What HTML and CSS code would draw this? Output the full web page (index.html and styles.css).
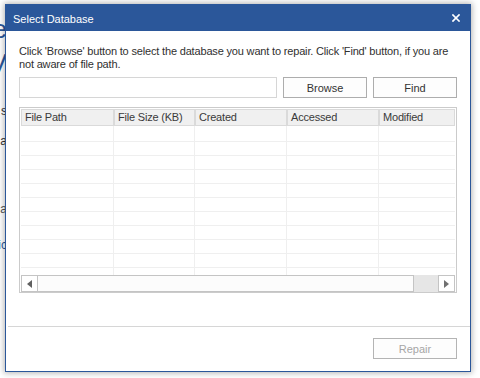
FILE: index.html
```html
<!DOCTYPE html>
<html>
<head>
<meta charset="utf-8">
<link rel="stylesheet" href="styles.css">
</head>
<body>
<div class="app">
  <div class="frag frag-e">e</div>
  <div class="frag frag-v">V</div>
  <div class="frag frag-s">s</div>
  <div class="frag frag-a">a</div>
  <div class="frag frag-ca">ca</div>
  <div class="frag frag-ic">ic</div>
</div>
<div class="dialog">
  <div class="titlebar">
    <span class="title">Select Database</span>
    <svg class="close" width="8" height="8" viewBox="0 0 8 8"><path d="M1 1L7 7M7 1L1 7" stroke="#fff" stroke-width="1.7" stroke-linecap="square"/></svg>
  </div>
  <div class="content">
    <p class="intro">Click 'Browse' button to select the database you want to repair. Click 'Find' button, if you are<br>not aware of file path.</p>
    <div class="pick-row">
      <input class="path" type="text">
      <button class="btn">Browse</button>
      <button class="btn">Find</button>
    </div>
    <div class="list">
      <div class="head">
        <div class="hcell c1">File Path</div>
        <div class="hcell c2">File Size (KB)</div>
        <div class="hcell c3">Created</div>
        <div class="hcell c4">Accessed</div>
        <div class="hcell c5">Modified</div>
      </div>
      <div class="rows">
        <div class="col c1"></div>
        <div class="col c2"></div>
        <div class="col c3"></div>
        <div class="col c4"></div>
        <div class="col c5 last"></div>
      </div>
      <div class="scroll">
        <div class="sbtn"><svg width="5" height="8" viewBox="0 0 5 8"><polygon points="5,0 5,8 0,4" fill="#606060"/></svg></div>
        <div class="thumb"></div>
        <div class="track"></div>
        <div class="sbtn"><svg width="5" height="8" viewBox="0 0 5 8"><polygon points="0,0 0,8 5,4" fill="#707070"/></svg></div>
      </div>
    </div>
  </div>
  <div class="sep"></div>
  <div class="footer">
    <button class="btn" disabled>Repair</button>
  </div>
</div>
</body>
</html>
```
FILE: styles.css
```css
body {
  margin: 0;
  width: 480px;
  height: 378px;
  background: #fff;
  position: relative;
  overflow: hidden;
  font-family: "Liberation Sans", Arial, sans-serif;
  font-size: 11px;
  color: #333;
}

.app {
  position: absolute;
  left: 0;
  top: 0;
  width: 6px;
  height: 378px;
  overflow: hidden;
  display: flex;
  flex-direction: column;
}

.frag {
  width: 40px;
  margin-left: -33px;
  text-align: right;
  white-space: nowrap;
}

.frag-e {
  margin-top: 14px;
  font-size: 26px;
  line-height: 30px;
  color: #2b579a;
}

.frag-v {
  margin-top: 4px;
  font-size: 26px;
  line-height: 30px;
  color: #2b579a;
}

.frag-s {
  margin-top: 26px;
  font-size: 12px;
  line-height: 14px;
  color: #333;
}

.frag-a {
  margin-top: 16px;
  font-size: 12px;
  line-height: 14px;
  color: #333;
}

.frag-ca {
  margin-top: 54px;
  font-size: 12px;
  line-height: 14px;
  color: #555;
}

.frag-ic {
  margin-top: 22px;
  font-size: 12px;
  line-height: 14px;
  color: #2b579a;
}

.dialog {
  position: absolute;
  left: 5px;
  top: 4px;
  width: 466px;
  height: 368px;
  box-sizing: border-box;
  border: 1px solid #2b579a;
  background: #fff;
  box-shadow: 0 0 6px 1px rgba(0, 0, 0, 0.3);
  display: flex;
  flex-direction: column;
}

.titlebar {
  height: 26px;
  flex: none;
  background: #2b579a;
  color: #fff;
  display: flex;
  align-items: center;
  justify-content: space-between;
  padding: 2px 10px 0 7px;
  box-sizing: border-box;
  font-size: 11px;
}

.close {
  display: block;
  margin-top: -3px;
}

.content {
  padding: 14px 13px 0 13px;
}

.intro {
  margin: 0;
  line-height: 13px;
  letter-spacing: -0.17px;
  color: #303030;
  white-space: nowrap;
}

.pick-row {
  display: flex;
  gap: 6px;
  margin-top: 6px;
  height: 21px;
}

.path {
  width: 258px;
  height: 21px;
  box-sizing: border-box;
  border: 1px solid #d6d6d6;
  margin: 0;
  padding: 0;
  background: #fff;
}

.btn {
  width: 84px;
  height: 21px;
  box-sizing: border-box;
  border: 1px solid #adadad;
  background: #fdfdfd;
  font: inherit;
  color: #333;
  padding: 0;
  margin: 0;
}

.btn:disabled {
  color: #a6a6a6;
  border-color: #b4b4b4;
  background: #fdfdfd;
}

.list {
  margin-top: 9px;
  height: 186px;
  box-sizing: border-box;
  border: 1px solid #cbcbcb;
  padding: 1px 1px 0 1px;
  display: flex;
  flex-direction: column;
}

.head {
  display: flex;
  height: 17px;
  flex: none;
}

.hcell {
  box-sizing: border-box;
  border: 1px solid #dadada;
  background: #f0f0f0;
  padding-left: 3px;
  line-height: 15px;
  color: #3a3a3a;
  letter-spacing: -0.2px;
  white-space: nowrap;
  overflow: hidden;
  flex: none;
}

.c1 { width: 93px; }
.c2 { width: 81px; }
.c3 { width: 92px; }
.c4 { width: 92px; }
.c5 { width: 76px; }

.rows {
  display: flex;
  height: 149px;
  flex: none;
}

.col {
  flex: none;
  box-sizing: border-box;
  border-right: 1px solid #efefef;
  padding-top: 2px;
  background-image: linear-gradient(to bottom, transparent 13px, #efefef 13px);
  background-size: 100% 14px;
  background-repeat: repeat-y;
  background-origin: content-box;
  background-clip: content-box;
}

.col.last {
  border-right: none;
}

.scroll {
  display: flex;
  height: 17px;
  flex: none;
}

.sbtn {
  width: 17px;
  flex: none;
  box-sizing: border-box;
  border: 1px solid #c4c4c4;
  background: #fff;
  display: flex;
  align-items: center;
  justify-content: center;
}

.sbtn svg {
  display: block;
}

.thumb {
  width: 376px;
  flex: none;
  box-sizing: border-box;
  border: 1px solid #c4c4c4;
  border-left: none;
  background: #fcfcfc;
}

.track {
  flex: 1;
  background: #e6e6e6;
}

.sep {
  margin: 33px 0 0 2px;
  height: 1px;
  background: #d6d6d6;
  flex: none;
}

.footer {
  display: flex;
  justify-content: flex-end;
  padding: 11px 13px 0;
}
```
